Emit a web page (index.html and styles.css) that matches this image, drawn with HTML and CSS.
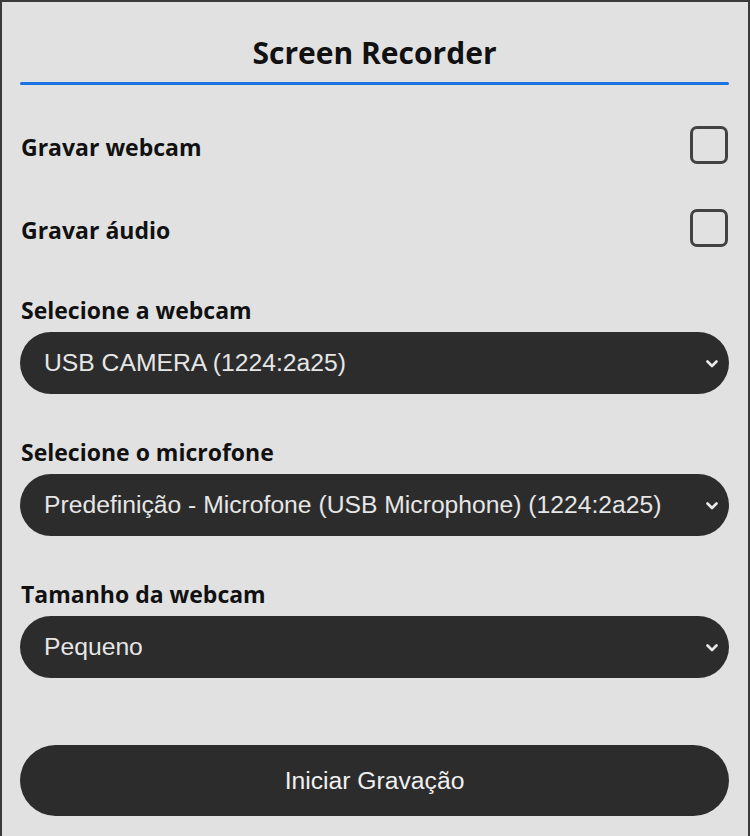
FILE: index.html
```
<!DOCTYPE html>
<html lang="pt">
<head>
<meta charset="utf-8">
<title>Screen Recorder</title>
<link rel="stylesheet" href="styles.css">
</head>
<body>
<div class="panel">
  <h1 class="title">Screen Recorder</h1>
  <div class="rule"></div>

  <div class="check-row">
    <span class="label">Gravar webcam</span>
    <span class="box"></span>
  </div>
  <div class="check-row second">
    <span class="label">Gravar áudio</span>
    <span class="box"></span>
  </div>

  <div class="group first">
    <div class="label">Selecione a webcam</div>
    <div class="select">
      <span class="value">USB CAMERA (1224:2a25)</span>
      <svg class="chev" width="12" height="8" viewBox="0 0 12 8"><path d="M1.5 1.5 L6 6 L10.5 1.5" fill="none" stroke="#e8e8e8" stroke-width="2.6" stroke-linecap="round" stroke-linejoin="round"/></svg>
    </div>
  </div>

  <div class="group">
    <div class="label">Selecione o microfone</div>
    <div class="select">
      <span class="value">Predefinição - Microfone (USB Microphone) (1224:2a25)</span>
      <svg class="chev" width="12" height="8" viewBox="0 0 12 8"><path d="M1.5 1.5 L6 6 L10.5 1.5" fill="none" stroke="#e8e8e8" stroke-width="2.6" stroke-linecap="round" stroke-linejoin="round"/></svg>
    </div>
  </div>

  <div class="group">
    <div class="label">Tamanho da webcam</div>
    <div class="select">
      <span class="value">Pequeno</span>
      <svg class="chev" width="12" height="8" viewBox="0 0 12 8"><path d="M1.5 1.5 L6 6 L10.5 1.5" fill="none" stroke="#e8e8e8" stroke-width="2.6" stroke-linecap="round" stroke-linejoin="round"/></svg>
    </div>
  </div>

  <button class="start">Iniciar Gravação</button>
</div>
</body>
</html>
```
FILE: styles.css
```
html, body {
  margin: 0;
  padding: 0;
  background: #e1e1e1;
}
body {
  width: 750px;
  height: 836px;
  overflow: hidden;
}
.panel {
  box-sizing: border-box;
  width: 750px;
  height: 860px;
  border: 2px solid #3a3a3a;
  padding: 0 19px 0 18px;
  background: #e1e1e1;
  display: flex;
  flex-direction: column;
}
.title {
  margin: 34px 0 0;
  font-family: "Open Sans", Lato, sans-serif;
  font-weight: 700;
  font-size: 30px;
  line-height: 34px;
  text-align: center;
  color: #111;
}
.rule {
  margin-top: 12px;
  height: 3px;
  border-radius: 2px;
  background: #1a73e0;
}
.label {
  font-family: "Open Sans", Lato, sans-serif;
  font-weight: 700;
  font-size: 23px;
  line-height: 24px;
  color: #111;
  padding-left: 1px;
}
.check-row {
  margin-top: 40px;
  height: 39px;
  display: flex;
  align-items: center;
  justify-content: space-between;
}
.check-row .label {
  padding-top: 4px;
}
.check-row.second {
  margin-top: 44px;
}
.box {
  box-sizing: border-box;
  width: 38px;
  height: 38px;
  border: 3px solid #424242;
  border-radius: 7px;
  margin-right: 1px;
}
.group {
  margin-top: 46px;
  display: flex;
  flex-direction: column;
  gap: 10px;
}
.group.first {
  margin-top: 51px;
}
.select {
  height: 62px;
  border-radius: 31px;
  background: #2c2c2c;
  display: flex;
  align-items: center;
  justify-content: space-between;
  padding: 0 11px 0 24px;
}
.value {
  font-family: "Liberation Sans", Arial, sans-serif;
  font-size: 24.7px;
  color: #e6e6e6;
  white-space: nowrap;
}
.chev {
  display: block;
  flex: none;
  margin-top: 2px;
}
.start {
  margin-top: 67px;
  height: 71px;
  border: none;
  border-radius: 36px;
  background: #2c2c2c;
  color: #f0f0f0;
  font-family: "Liberation Sans", Arial, sans-serif;
  font-size: 24.7px;
  padding: 0;
}
```
